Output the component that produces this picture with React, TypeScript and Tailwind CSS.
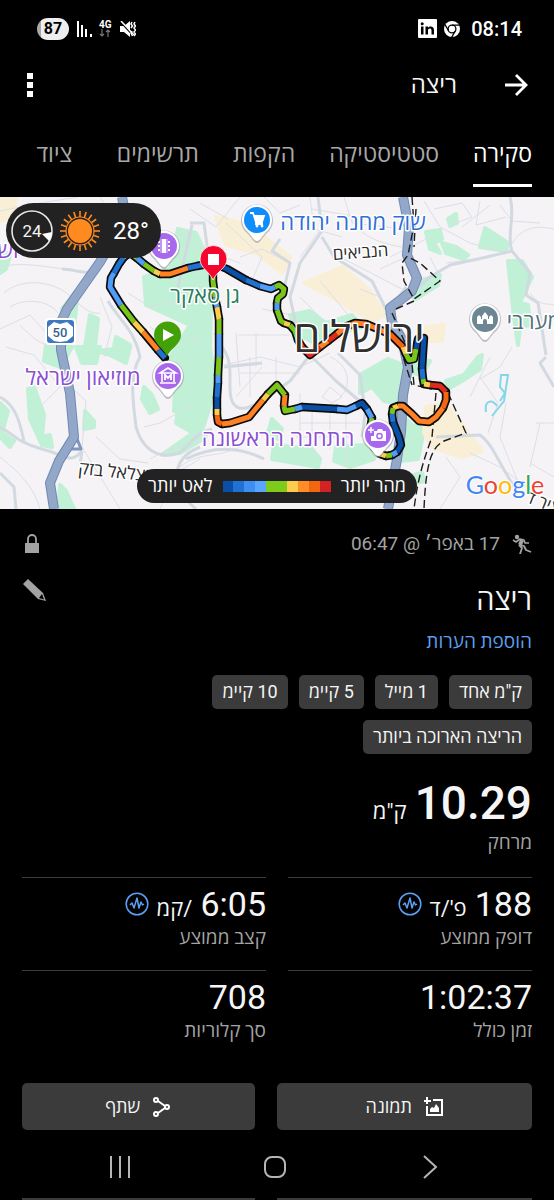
import type { ReactNode } from 'react';

const tabs = ['סקירה', 'סטטיסטיקה', 'הקפות', 'תרשימים', 'ציוד'];

const badges = ['ק"מ אחד', '1 מייל', '5 קיימ', '10 קיימ', 'הריצה הארוכה ביותר'];

const paceScale = [
  'bg-[#0a4fa6]',
  'bg-[#1f72d2]',
  'bg-[#3f8ff3]',
  'bg-[#58a6ff]',
  'bg-[#7fcb1c]',
  'bg-[#7fcb1c]',
  'bg-[#fdcb4e]',
  'bg-[#ff8e28]',
  'bg-[#f36510]',
  'bg-[#d32224]',
];

const C = {
  navy: '#0a4fa6',
  blue: '#1f72d2',
  sky: '#4f9df8',
  green: '#7ac51c',
  yellow: '#fdcb4e',
  orange: '#ff8124',
  deep: '#f36510',
  red: '#e02a1c',
};

// pace coloured pieces of the track, in running order
const track: [string, string][] = [
  [C.blue, '165,161 158,153'],
  [C.orange, '158,153 143,135'],
  [C.yellow, '143,135 134,125'],
  [C.green, '134,125 121,108'],
  [C.sky, '121,108 110,90 111,81 114,76'],
  [C.blue, '114,76 119,67 124,60'],
  [C.green, '124,60 130,56 137,61'],
  [C.sky, '137,61 144,67'],
  [C.green, '144,67 154,74'],
  [C.yellow, '154,74 160,77'],
  [C.orange, '160,77 170,77 188,71'],
  [C.blue, '188,71 197,69 213,66'],
  [C.navy, '213,66 227,72 246,83'],
  [C.blue, '246,83 260,89'],
  [C.sky, '260,89 271,92 275,90'],
  [C.green, '275,90 279,88 284,92 283,97 278,101 277,106'],
  [C.sky, '277,106 277,113'],
  [C.green, '277,113 281,124 284,126'],
  [C.yellow, '284,126 290,128'],
  [C.green, '290,128 295,134 298,143'],
  [C.deep, '298,143 302,150'],
  [C.red, '302,150 310,158 320,150'],
  [C.orange, '320,150 328,144'],
  [C.red, '328,144 337,137'],
  [C.orange, '337,137 345,130 355,126 366,127 378,132 390,137'],
  [C.deep, '390,137 403,150'],
  [C.yellow, '403,150 406,157'],
  [C.green, '406,157 409,163 414,162 416,152'],
  [C.navy, '416,152 418,142 424,141 423,156 422,172'],
  [C.blue, '422,172 423,182'],
  [C.green, '423,182 424,187'],
  [C.yellow, '424,187 430,188'],
  [C.red, '430,188 440,189 446,195'],
  [C.deep, '446,195 446,203 443,211'],
  [C.orange, '443,211 436,220 429,225 419,224 412,217 403,209 398,209'],
  [C.yellow, '398,209 393,211'],
  [C.green, '393,211 392,217'],
  [C.blue, '392,217 393,225'],
  [C.navy, '393,225 399,240 401,248 397,255'],
  [C.sky, '397,255 392,258'],
  [C.green, '392,258 386,259'],
  [C.yellow, '386,259 380,257 374,250'],
  [C.green, '374,250 370,232 372,221'],
  [C.sky, '372,221 367,212'],
  [C.navy, '367,212 362,206 356,209'],
  [C.sky, '356,209 347,213 337,212'],
  [C.navy, '337,212 302,210'],
  [C.sky, '302,210 295,212'],
  [C.green, '295,212 285,214 284,209'],
  [C.orange, '284,209 285,198'],
  [C.green, '285,198 277,188 268,197'],
  [C.yellow, '268,197 263,203'],
  [C.orange, '263,203 249,220 230,226 222,227'],
  [C.deep, '222,227 218,225 217,218'],
  [C.yellow, '217,218 217,212'],
  [C.navy, '217,212 217,200'],
  [C.blue, '217,200 218,186'],
  [C.sky, '218,186 218,178'],
  [C.green, '218,178 219,160'],
  [C.sky, '219,160 219,137'],
  [C.green, '219,137 219,122'],
  [C.yellow, '219,122 217,110'],
  [C.sky, '217,110 215,100'],
  [C.green, '215,100 213,84 213,66'],
];

const parks = [
  '178,32 196,36 212,70 210,150 216,190 200,240 176,226 182,190 170,160 190,128 146,108 144,80 170,72',
  '62,112 78,92 72,150 64,164',
  '90,118 98,122 94,158 84,156',
  '46,148 60,146 60,170 44,164',
  '76,150 100,150 96,166 82,166',
  '98,154 130,150 126,166 110,158',
  '116,140 130,148 128,156 114,150',
  '28,192 34,190 44,218 42,240 50,238 52,250 42,248 30,222',
  '0,206 8,214 2,236 14,244 10,250 0,240',
  '85,214 94,224 94,230 84,232',
  '60,288 66,294 74,312 58,312',
  '144,190 152,198 158,212 150,216 142,202',
  '176,168 214,172 214,200 196,220 174,214',
  '162,258 196,234 206,240 180,256',
  '0,52 10,58 6,72 0,76',
  '272,222 282,232 278,242 268,236',
  '274,248 312,252 320,262 318,270 272,262',
  '336,250 366,248 374,262 350,270 334,264',
  '290,118 310,114 326,126 352,118 362,130 330,138 318,148 296,136',
  '360,178 388,162 404,168 396,206 384,204 372,190 360,196',
  '400,216 412,228 424,232 418,262 400,264 404,240',
  '412,162 430,164 422,178 412,176',
  '426,35 440,33 442,42 434,46 440,56 430,52',
  '442,46 456,50 468,58 464,62 446,56',
  '448,22 456,17 457,26 450,29',
  '485,31 508,46 506,54 480,50',
  '420,84 432,80 440,78 438,88 416,102 410,98',
  '508,64 522,64 532,80 524,96 520,106 528,108 530,128 520,130 518,148 514,120',
  '446,184 464,178 478,160 482,158 480,172 462,184 448,192',
  '414,278 422,276 424,284 416,286',
];

const sand = [
  '216,20 250,28 290,60 282,76 256,56 226,48',
  '304,86 342,70 368,92 386,118 372,124 332,100',
  '426,210 446,206 468,236 482,254 462,260 432,250 424,236',
  '426,130 444,128 442,144 426,144',
  '0,0 16,0 14,20 0,24',
];

const lanes = [
  'M0 14L40 6L78 0M0 70C30 62 64 76 98 74M4 96C20 82 44 84 60 92S84 118 100 116',
  'M10 110C26 100 50 104 58 116M0 132L30 118L50 140M6 150L34 158L60 190L40 210M20 128C30 138 40 150 60 150',
  'M100 100L112 130L104 160M128 96L150 110L176 104M150 130L176 146L200 140',
  'M0 260C20 276 34 290 40 312M60 180L86 204L82 250L120 312M96 240L120 262L148 266',
  'M144 230L160 226L196 206M150 262C170 250 186 250 200 240M160 312L176 276L200 262',
  'M180 270C200 254 214 262 240 250M224 168L260 160L300 170L330 156M236 200L262 170M300 196V240M312 214V262M330 214V252M346 216V270M300 226H360M296 240H352M240 176H300M250 160V200M276 160V186',
  'M236 136L240 190M238 138H290M256 136V170M240 60L262 52L290 66M226 26L262 60L250 88M300 60L330 20M312 12L370 22M310 0L314 32L342 40M340 60L402 92M344 0L352 26L404 32',
  'M350 20C360 40 380 46 402 50M390 60L430 40M380 72L402 62M360 92L380 100M300 100L330 130M320 84L350 120M262 112L292 118',
  'M424 4L440 30L470 46L500 54M434 12L462 6L472 20L450 28M480 4L476 28L506 20M446 66L476 62M500 8L512 24L540 26M462 30L490 8M430 60L438 76',
  'M510 50C520 30 536 28 554 32M530 96C540 110 548 106 554 108M512 150L500 170L480 182M470 200L490 160M480 180L498 206L488 236M506 206L500 240L520 290M536 226H554M530 270L540 226M554 280L530 266M446 260L460 280L440 312M470 256L500 270L540 300',
  'M100 0L112 20M190 12L216 30L240 0M200 6L228 22M176 30L196 50L240 66M264 0L280 16L300 8M330 160C350 168 352 190 340 200M322 200L330 190L342 200L332 206Z',
];

const streets = [
  'M62 72C76 72 88 80 100 72',
  'M108 104C120 124 134 132 140 160C128 180 134 210 136 230C140 244 150 260 170 258S190 236 212 232',
  'M0 230C12 236 18 246 42 252S70 268 82 254M0 200C16 208 20 226 24 244M0 276L14 290L16 312M82 254L80 268',
  'M190 26L204 26L208 56M178 90L192 28M222 150C236 168 226 190 232 204S256 210 268 196M224 170L262 166',
  'M318 0L322 34L300 66L290 100L296 128M322 40L334 60L372 84L386 112M280 42L272 54L290 66L284 92',
  'M310 158L290 184L262 204M310 158L336 184L362 206M338 156L360 178L364 206M186 262C214 248 240 250 264 262',
  'M510 0C516 20 506 36 512 54M512 54L530 76L526 98L538 106L546 158',
  'M512 54L478 62L450 68L430 80L416 92M546 160L540 166L554 190M436 240L480 238C494 248 500 270 516 292M366 210L362 240M406 90L386 118',
  'M196 312C170 290 170 262 200 250',
];

const highways = [
  'M122 0L126 20L100 65L67 112L61 125V153L70 196L74 240L59 264L50 286L54 312',
  'M403 0L409 31L407 58L417 81L412 94L390 111L392 125L402 142L408 170L403 198L401 235L397 262L388 312',
];

const borders =
  'M412 0L414 28L408 58L402 66L404 84L414 102L440 84L420 66L408 60M416 12L414 50M414 104L396 112M400 150L412 188M411 156L414 188L432 192M448 196L466 236L444 244C432 250 426 264 424 312M436 196L432 240C424 262 418 280 414 312M392 116L406 148';

function Pin({ x, y, color, children }: { x: number; y: number; color: string; children: ReactNode }) {
  return (
    <g transform={`translate(${x} ${y})`}>
      <path d="M0 23C-3 23-5 18-10 13A16 16 0 1 1 10 13C5 18 3 23 0 23Z" fill="#8d9299" opacity=".55" />
      <path d="M0 21C-3 21-5 16-10 11A15 15 0 1 1 10 11C5 16 3 21 0 21Z" fill="#fff" />
      <circle r="13" fill={color} />
      {children}
    </g>
  );
}

function RouteMap() {
  return (
    <svg
      viewBox="0 0 554 312"
      preserveAspectRatio="xMidYMid slice"
      className="block h-[312px] w-full bg-[#f5f3f6] [direction:ltr]"
      role="img"
      aria-label="מפת המסלול"
    >
      {parks.map((p) => (
        <polygon key={p} points={p} fill="#c0f0d5" stroke="#c0f0d5" strokeWidth="4" strokeLinejoin="round" />
      ))}
      {sand.map((p) => (
        <polygon key={p} points={p} fill="#f9efd6" stroke="#f9efd6" strokeWidth="4" strokeLinejoin="round" />
      ))}
      <g fill="none" stroke="#dcdfe6" strokeWidth="1">
        {lanes.map((d) => (
          <path key={d} d={d} />
        ))}
      </g>
      <g fill="none" stroke="#d2d9e1" strokeWidth="3" strokeLinejoin="round">
        {streets.map((d) => (
          <path key={d} d={d} />
        ))}
      </g>
      <path
        d="M486 215C484 203 492 202 497 209M492 219L504 204L508 178L501 178L500 190L505 196L500 204"
        fill="none"
        stroke="#83d7e6"
        strokeWidth="2"
      />
      <g fill="none" strokeLinejoin="round">
        <path d="M74 234L81 252H66" stroke="#7f97bf" strokeWidth="3" />
        {highways.map((d) => (
          <path key={d} d={d} stroke="#6f8ab4" strokeWidth="10" />
        ))}
        {highways.map((d) => (
          <path key={d} d={d} stroke="#93a8c9" strokeWidth="8" />
        ))}
      </g>
      <path d={borders} fill="none" stroke="#1d1d1d" strokeWidth="1.4" strokeDasharray="8 4" />

      {/* road shield */}
      <rect x="45" y="121" width="31" height="27" rx="4" fill="#fff" />
      <rect x="47" y="123" width="27" height="23" rx="3" fill="#3f78bd" />
      <path d="M54 125L60 127L67 125L73 130V139L67 144L60 145L54 144L48 139V130Z" fill="#fff" />
      <text x="60" y="140" textAnchor="middle" fontSize="13" fontWeight="500" fill="#3a5f8f">50</text>

      {/* track */}
      <g fill="none" strokeLinejoin="round" strokeLinecap="round">
        {track.map(([, p], i) => (
          <polyline key={i} points={p} stroke="#0b0b0b" strokeWidth="8.4" />
        ))}
      </g>
      <g fill="none" strokeLinejoin="round">
        {track.map(([color, p], i) => (
          <polyline key={i} points={p} stroke={color} strokeWidth="5" />
        ))}
      </g>

      {/* places */}
      <g textAnchor="middle" stroke="#fff" strokeWidth="3" strokeLinejoin="round" paintOrder="stroke">
        <text x="353" y="33" fontSize="22" fill="#2f6fd6">שוק מחנה יהודה</text>
        <text x="361" y="61" fontSize="17" fill="#2c2c2c" transform="rotate(-4 361 61)">הנביאים</text>
        <text x="205" y="106" fontSize="22" fill="#2a7d5c">גן סאקר</text>
        <text x="83" y="188" fontSize="22" fill="#8a4fd3">מוזיאון ישראל</text>
        <text x="278" y="249" fontSize="22" fill="#8a4fd3">התחנה הראשונה</text>
        <text x="534" y="132" fontSize="22" fill="#55707c">מערבי</text>
        <text x="8" y="61" fontSize="22" fill="#8a4fd3">וש</text>
        <text x="116" y="281" fontSize="18" fill="#2c2c2c" transform="rotate(6 116 281)">בצלאל בזק</text>
        <text x="541" y="311" fontSize="17" fill="#2c2c2c" transform="rotate(22 541 311)">ציר ד</text>
        <text x="359" y="155" fontSize="43" fontWeight="500" fill="#303030">ירושלים</text>
      </g>

      <Pin x={257} y={23} color="#0f8dfa">
        <path d="M-7-7H-4L-1 2H5L7-4H-3M-1 2V4H6" fill="none" stroke="#fff" strokeWidth="1.8" />
        <path d="M-3-4H7L5 1H-1Z" fill="#fff" />
        <circle cx="0" cy="6" r="1.4" fill="#fff" />
        <circle cx="5" cy="6" r="1.4" fill="#fff" />
      </Pin>
      <Pin x={164} y={49} color="#a768ee">
        <path d="M-6-7H6V7H-6Z" fill="#fff" />
        <path d="M-3-7V7M3-7V7" stroke="#a768ee" strokeWidth="1.4" />
        <path d="M-5-7V7M5-7V7" stroke="#a768ee" strokeWidth="2" strokeDasharray="2 2" />
      </Pin>
      <Pin x={485} y={122} color="#6c8793">
        <path d="M-8 5V-2L-6-4L-4-2V0H-3V-3L0-7L3-3V0H4V-2L6-4L8-2V5H2V2A2 2 0 0 0-2 2V5Z" fill="#fff" />
      </Pin>
      <Pin x={168} y={179} color="#a768ee">
        <path d="M-8-3L0-8L8-3ZM-6-3V6M6-3V6M-8 7H8" fill="none" stroke="#fff" strokeWidth="1.6" />
        <path d="M-3 4V-1L0 2L3-1V4" fill="none" stroke="#fff" strokeWidth="1.8" />
      </Pin>
      <Pin x={378} y={238} color="#a768ee">
        <path d="M-4-4H-1L0-6H4L5-4H8V6H-7V1H-4Z" fill="#fff" />
        <circle cx="1.5" cy="1" r="2.6" fill="none" stroke="#a768ee" strokeWidth="1.5" />
        <path d="M-7-8V-2M-10-5H-4" stroke="#fff" strokeWidth="1.5" />
      </Pin>

      {/* start and finish */}
      <path d="M167 159C163 151 154 147 154 138A13.5 13.5 0 1 1 181 138C181 147 171 151 167 159Z" fill="#41a106" />
      <path d="M163 132L174 138L163 144Z" fill="#fff" />
      <path
        d="M213 83C209 74 200 71 200 62A13.5 13.5 0 1 1 227 62C227 71 217 74 213 83Z"
        fill="#f4062f"
        stroke="#fff"
        strokeWidth=".8"
      />
      <rect x="208" y="57" width="11" height="11" fill="#fff" />

      <text x="505" y="297" textAnchor="middle" className="font-[Lato,sans-serif]" fontSize="25" stroke="#fff" strokeWidth="2" paintOrder="stroke">
        <tspan fill="#4285f4">G</tspan>
        <tspan fill="#ea4335">o</tspan>
        <tspan fill="#fbbc05">o</tspan>
        <tspan fill="#4285f4">g</tspan>
        <tspan fill="#34a853">l</tspan>
        <tspan fill="#ea4335">e</tspan>
      </text>
    </svg>
  );
}

function WeatherChip() {
  return (
    <div dir="ltr" className="absolute top-1.5 left-1.5 flex h-[55px] w-[155px] items-center rounded-full bg-[#222] pl-[5px] text-white">
      {/* wind */}
      <svg viewBox="0 0 42 42" className="size-[42px]">
        <circle cx="21" cy="21" r="20" fill="none" stroke="#e8e8e8" strokeWidth="1.6" />
        <path d="M31 24L41 22Q41 27 38 31Z" fill="#fff" />
        <text x="21" y="27" textAnchor="middle" fontSize="17" fill="#f2f2f2">24</text>
      </svg>
      <svg viewBox="0 0 42 42" className="ml-1.5 size-[42px]">
        <circle cx="21" cy="21" r="12" fill="#ff8a1f" />
        <circle cx="21" cy="21" r="14" fill="none" stroke="#ff8a1f" strokeWidth="1.2" />
        {Array.from({ length: 20 }, (_, i) => (
          <path key={i} d="M21 1V7" stroke="#ff8a1f" strokeWidth="1.6" transform={`rotate(${i * 18} 21 21)`} />
        ))}
      </svg>
      <span className="ml-3 text-2xl">28°</span>
    </div>
  );
}

function PaceLegend() {
  return (
    <div className="absolute bottom-1.5 left-1/2 flex h-[34px] w-[280px] -translate-x-1/2 items-center justify-between rounded-full bg-[#222] px-[11px] text-lg whitespace-nowrap text-white">
      <span>מהר יותר</span>
      <div dir="ltr" className="flex h-[11px] w-[108px]">
        {paceScale.map((c, i) => (
          <span key={i} className={`flex-1 ${c}`} />
        ))}
      </div>
      <span>לאט יותר</span>
    </div>
  );
}

function StatusBar() {
  return (
    <div dir="ltr" className="flex h-[57px] items-center justify-between pr-8 pl-[37px] text-white">
      <div className="flex items-center">
        <span className="flex h-[22px] w-8 items-center justify-center rounded-full bg-linear-to-r from-[#a8a8a8] from-12% to-[#eee] to-12% text-base font-bold text-black">
          87
        </span>
        <svg viewBox="0 0 16 16" className="ml-2 size-4 fill-white">
          <path d="M0 0H2V16H0ZM4 4H6V16H4ZM8 8H10V16H8ZM13 13H15V16H13Z" />
        </svg>
        <span className="ml-1.5 flex flex-col items-center">
          <span className="text-[10px] leading-[9px] font-bold">4G</span>
          <svg viewBox="0 0 12 8" className="h-2 w-3" fill="none" stroke="#777" strokeWidth="1.2">
            <path d="M3 0V7M1 5L3 7L5 5M9 8V1M7 3L9 1L11 3" />
          </svg>
        </span>
        <svg viewBox="0 0 16 16" className="ml-2 size-4">
          <path d="M0 5H4L10 0V16L4 11H0Z" fill="#fff" />
          <path d="M0 0L13 14" stroke="#000" strokeWidth="2" />
          <path d="M1 0L14 14" stroke="#fff" strokeWidth="1.5" />
          <path
            d="M12 1L11 3L12.5 5L11 7M15 1L14 3L15.500 5L14 7L15.500 9L14 11L15.500 13L14 15M12 10L11 12L12.500 15"
            fill="none"
            stroke="#fff"
            strokeWidth="1.5"
          />
        </svg>
      </div>
      <div className="flex items-center">
        <svg viewBox="0 0 19 19" className="size-[19px]">
          <rect width="19" height="19" rx="1" fill="#fff" />
          <path d="M3 7.5H5.5V15.5H3ZM7.500 7.5H10V8.700C11 7 16 6.500 16 11V15.500H13.500V11.500C13.500 8.800 10 9 10 11.500V15.500H7.500Z" fill="#000" />
          <circle cx="4.2" cy="4.7" r="1.5" fill="#000" />
        </svg>
        <svg viewBox="0 0 16 16" className="mx-[7px] size-4">
          <circle cx="8" cy="8" r="8" fill="#fff" />
          <circle cx="8" cy="8" r="3.9" fill="#fff" stroke="#000" strokeWidth="1.3" />
          <path d="M8 4.2H15.5M4.700 10L1 3.600M11.300 10L7.600 16.400" stroke="#000" strokeWidth="1.3" />
        </svg>
        <span className="ml-1 text-xl font-medium">08:14</span>
      </div>
    </div>
  );
}

function PulseIcon() {
  return (
    <svg viewBox="0 0 24 24" className="size-6" fill="none" stroke="#5aa0f5">
      <circle cx="12" cy="12" r="10.8" strokeWidth="1.5" />
      <path d="M5 13L7 11L9 16L12 6L14 16L16 10L17.5 13L19 12" strokeWidth="1.5" strokeLinejoin="round" />
    </svg>
  );
}

function Stat({ value, unit, label, pulse }: { value: string; unit?: string; label: string; pulse?: boolean }) {
  return (
    <div className="h-[93px] border-t border-[#3c3c3c] pt-2">
      <div className="flex h-9 items-baseline gap-2">
        <span className="text-[34px] leading-9">{value}</span>
        {unit && <span className="text-[22px] leading-9">{unit}</span>}
        {pulse && (
          <button aria-label={`גרף ${label}`} className="self-center">
            <PulseIcon />
          </button>
        )}
      </div>
      <p className="mt-1 text-[19px] leading-6 text-[#a3a3a3]">{label}</p>
    </div>
  );
}

export default function App() {
  return (
    <div dir="rtl" className="min-h-screen bg-black font-[Roboto,'Open_Sans',sans-serif] text-[#f5f5f5]">
      <StatusBar />

      <header className="flex h-14 items-center px-[22px]">
        <button aria-label="חזרה" className="p-1">
          <svg viewBox="0 0 24 24" className="size-6" fill="none" stroke="#fff" strokeWidth="2.8">
            <path d="M1 12H21M12 2L22 12L12 22" />
          </svg>
        </button>
        <h1 className="mr-[43px] text-2xl">ריצה</h1>
        <button aria-label="אפשרויות נוספות" className="mr-auto flex w-4 flex-col items-center gap-[3px]">
          <span className="size-1.5 bg-white" />
          <span className="size-1.5 bg-white" />
          <span className="size-1.5 bg-white" />
        </button>
      </header>

      <nav className="flex h-[84px] items-end gap-[34px] px-[22px] pb-2.5 text-[23px] whitespace-nowrap">
        {tabs.map((tab, i) => (
          <button
            key={tab}
            className={
              i === 0
                ? 'h-[52px] border-b-[3px] border-white pb-2 text-white'
                : 'h-[52px] min-w-[57px] border-b-[3px] border-transparent pb-2 text-[#a8a8a8]'
            }
          >
            {tab}
          </button>
        ))}
      </nav>

      <section className="relative overflow-hidden">
        <RouteMap />
        <WeatherChip />
        <PaceLegend />
      </section>

      <main className="px-[22px]">
        <div className="flex items-center pt-[22px] text-[#a3a3a3]">
          <svg viewBox="0 0 20 20" className="size-5" fill="none" stroke="#a3a3a3">
            <circle cx="5" cy="3" r="2.2" fill="#a3a3a3" stroke="none" />
            <path d="M1 6L4 8L8 5L12 6L13 9L17 9" strokeWidth="1.6" strokeLinejoin="round" />
            <path d="M10 6L8 11" strokeWidth="4" />
            <path d="M8 11L12 12L14 16L19 18M7 11L10 14L8 20" strokeWidth="1.8" strokeLinejoin="round" />
          </svg>
          <span className="mr-3 text-[19px] leading-[26px]">17 באפר׳ @ 06:47</span>
          <svg viewBox="0 0 16 20" className="mr-auto ml-0.5 h-5 w-4">
            <path d="M1 9H15V19H1Z" fill="#a3a3a3" />
            <path d="M4 9V5A4 4 0 0 1 12 5V9" fill="none" stroke="#a3a3a3" strokeWidth="1.8" />
          </svg>
        </div>

        <div className="mt-[21px] flex items-start justify-between">
          <h2 className="text-[29px] leading-[44px]">ריצה</h2>
          <button aria-label="עריכה">
            <svg viewBox="0 0 24 24" className="size-6">
              <path d="M1 6L6 1L21 15L24 23L16 21Z" fill="#a3a3a3" />
              <path d="M17 20L20 16L22 21.5Z" fill="#000" />
            </svg>
          </button>
        </div>
        <a href="#notes" className="mt-1.5 block text-[19px] leading-7 text-[#5c9fee]">
          הוספת הערות
        </a>

        <ul className="mt-[19px] flex flex-wrap gap-[11px] pl-16">
          {badges.map((badge) => (
            <li key={badge} className="h-[34px] rounded-[5px] bg-[#3b3b3b] px-2.5 text-lg leading-[34px]">
              {badge}
            </li>
          ))}
        </ul>

        <div className="mt-6">
          <div className="flex h-12 items-baseline gap-2">
            <span className="text-[46px] leading-[50px] font-medium">10.29</span>
            <span className="text-[22px]">ק"מ</span>
          </div>
          <p className="mt-[5px] text-[19px] leading-6 text-[#a3a3a3]">מרחק</p>
        </div>

        <div className="mt-[22px] grid grid-cols-2 gap-x-[22px]">
          <Stat value="188" unit="פ'/ד" label="דופק ממוצע" pulse />
          <Stat value="6:05" unit="/קמ" label="קצב ממוצע" pulse />
          <Stat value="1:02:37" label="זמן כולל" />
          <Stat value="708" label="סך קלוריות" />
        </div>

        <div className="mt-5 flex gap-[22px] text-lg">
          <button className="flex h-[47px] flex-[12] items-center justify-center gap-3 rounded-[5px] bg-[#3b3b3b]">
            <svg viewBox="0 0 20 20" className="size-5" fill="none" stroke="#fff" strokeWidth="2">
              <path d="M9 3H18V18H3V9M3 0V7M0 4H7" />
              <path d="M6 15V12L8 10L10 11L12 7L15 11V15Z" fill="#fff" stroke="none" />
            </svg>
            תמונה
          </button>
          <button className="flex h-[47px] flex-[11] items-center justify-center gap-3 rounded-[5px] bg-[#3b3b3b]">
            <svg viewBox="0 0 20 20" className="size-5" fill="none" stroke="#fff" strokeWidth="2">
              <circle cx="4" cy="3" r="2" />
              <circle cx="4" cy="17" r="2" />
              <circle cx="15" cy="10" r="2" />
              <path d="M6 4L13 9M6 16L13 11" />
            </svg>
            שתף
          </button>
        </div>
      </main>

      <footer dir="ltr" className="grid h-[68px] grid-cols-3 items-center justify-items-center pt-1.5 pr-[47px] pl-[42px]">
        <button aria-label="יישומים אחרונים">
          <svg viewBox="0 0 24 24" className="size-6" stroke="#b5b5b5" strokeWidth="2">
            <path d="M3 1V23M12 1V23M21 1V23" />
          </svg>
        </button>
        <button aria-label="בית">
          <svg viewBox="0 0 24 24" className="size-6" fill="none" stroke="#b5b5b5" strokeWidth="2">
            <rect x="2" y="2" width="20" height="20" rx="7" />
          </svg>
        </button>
        <button aria-label="הקודם">
          <svg viewBox="0 0 24 24" className="size-6" fill="none" stroke="#b5b5b5" strokeWidth="2">
            <path d="M6 1L18 12L6 23" />
          </svg>
        </button>
      </footer>
      <div aria-hidden="true" className="flex gap-[22px] px-[22px]">
        <div className="h-0.5 flex-[12] bg-[#3b3b3b]" />
        <div className="h-0.5 flex-[11] bg-[#3b3b3b]" />
      </div>
    </div>
  );
}
